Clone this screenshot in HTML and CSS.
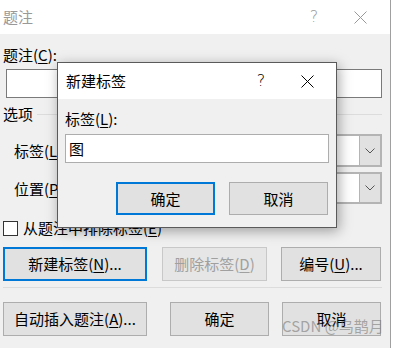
FILE: index.html
```html
<!DOCTYPE html>
<html lang="zh-CN">
<head>
  <meta charset="UTF-8">
  <title>题注</title>
  <link rel="stylesheet" href="styles.css">
</head>
<body>

  <div class="dialog main">
    <div class="titlebar">
      <span class="title">题注</span>
      <div class="controls">
        <span class="ctl help">?</span>
        <span class="ctl close">
          <svg width="13" height="13" viewBox="0 0 13 13"><path d="M0.5 0.5L12.5 12.5M12.5 0.5L0.5 12.5" stroke="currentColor" stroke-width="1" fill="none"/></svg>
        </span>
      </div>
    </div>

    <div class="content">
      <div class="label">题注(<u>C</u>):</div>
      <div class="textbox caption-box"></div>

      <div class="group-head">
        <span>选项</span>
        <span class="rule"></span>
      </div>

      <div class="field">
        <span class="field-label">标签(<u>L</u>):</span>
        <div class="combo"><span class="combo-text"></span><span class="combo-btn"><svg width="10" height="6" viewBox="0 0 10 6"><path d="M0.5 0.5L5 5L9.5 0.5" stroke="#555" fill="none"/></svg></span></div>
      </div>
      <div class="field second">
        <span class="field-label">位置(<u>P</u>):</span>
        <div class="combo"><span class="combo-text"></span><span class="combo-btn"><svg width="10" height="6" viewBox="0 0 10 6"><path d="M0.5 0.5L5 5L9.5 0.5" stroke="#555" fill="none"/></svg></span></div>
      </div>

      <div class="check-row">
        <span class="checkbox"></span>
        <span>从题注中排除标签(<u>E</u>)</span>
      </div>

      <div class="btn-row">
        <button class="btn focus w-wide">新建标签(<u>N</u>)...</button>
        <button class="btn disabled w-del" disabled>删除标签(<u>D</u>)</button>
        <button class="btn w-num">编号(<u>U</u>)...</button>
      </div>

      <div class="separator"></div>

      <div class="btn-row bottom">
        <button class="btn w-wide">自动插入题注(<u>A</u>)...</button>
        <button class="btn w-ok">确定</button>
        <button class="btn w-cancel">取消</button>
      </div>
    </div>

    <!-- New label dialog on top -->
    <div class="dialog popup">
      <div class="titlebar">
        <span class="title">新建标签</span>
        <div class="controls">
          <span class="ctl help">?</span>
          <span class="ctl close">
            <svg width="13" height="13" viewBox="0 0 13 13"><path d="M0.5 0.5L12.5 12.5M12.5 0.5L0.5 12.5" stroke="currentColor" stroke-width="1" fill="none"/></svg>
          </span>
        </div>
      </div>
      <div class="content">
        <div class="label">标签(<u>L</u>):</div>
        <div class="textbox">图</div>
        <div class="popup-buttons">
          <button class="btn focus">确定</button>
          <button class="btn">取消</button>
        </div>
      </div>
    </div>

    <div class="watermark">CSDN @乌鹊月</div>
  </div>

</body>
</html>
```

FILE: styles.css
```css
body {
  margin: 0;
  background: #fff;
  font-family: "Noto Sans CJK SC", "Noto Sans", sans-serif;
  font-size: 15px;
  color: #000;
  overflow: hidden;
}

u {
  text-decoration: underline;
  text-underline-offset: 2px;
}

.dialog.main {
  position: relative;
  width: 390px;
  height: 348px;
  border-right: 1px solid #a0a0a0;
  background: #f0f0f0;
}

.titlebar {
  display: flex;
  align-items: center;
  height: 34px;
  background: #fff;
  padding-left: 3px;
  padding-right: 7px;
}

.titlebar .title {
  color: #999;
  line-height: 20px;
}

.controls {
  margin-left: auto;
  display: flex;
  align-items: center;
}

.ctl {
  width: 46px;
  display: flex;
  justify-content: center;
  align-items: center;
  color: #999;
}

.ctl.help {
  font-family: "DejaVu Sans", sans-serif;
  font-size: 16px;
  font-weight: 300;
  line-height: 20px;
}

.content {
  padding: 11px 8px 0 3px;
}

.label {
  line-height: 20px;
}

.textbox {
  height: 29px;
  box-sizing: border-box;
  background: #fff;
  border: 1px solid #7a7a7a;
  line-height: 27px;
  padding-left: 3px;
}

.caption-box {
  margin: 4px 0 0 3px;
}

.group-head {
  display: flex;
  align-items: center;
  margin-top: 6px;
  height: 20px;
  line-height: 20px;
}

.group-head .rule {
  flex: 1;
  height: 1px;
  background: #dcdcdc;
  margin-left: 4px;
}

.field {
  display: flex;
  align-items: center;
  margin-top: 10px;
  height: 33px;
}

.field.second {
  margin-top: 5px;
  height: 32px;
}

.field-label {
  margin-left: 11px;
  width: 80px;
}

.combo {
  flex: 1;
  height: 100%;
  box-sizing: border-box;
  display: flex;
  border: 2px solid #b4b4b4;
  background: #fff;
}

.combo-text {
  flex: 1;
}

.combo-btn {
  width: 20px;
  background: #e1e1e1;
  border-left: 1px solid #b4b4b4;
  display: flex;
  justify-content: center;
  align-items: center;
}

.check-row {
  display: flex;
  align-items: center;
  margin-top: 14px;
  height: 20px;
  line-height: 20px;
}

.checkbox {
  width: 13px;
  height: 13px;
  background: #fff;
  border: 1px solid #333;
  margin-right: 5px;
}

.btn-row {
  display: flex;
  margin-top: 9px;
  height: 34px;
}

.btn {
  font-family: inherit;
  font-size: 15px;
  color: #000;
  background: #e1e1e1;
  border: 1px solid #adadad;
  border-radius: 0;
  padding: 0;
  height: 100%;
  box-sizing: border-box;
  line-height: 20px;
}

.btn.focus {
  border: 2px solid #0078d7;
}

.btn.disabled {
  color: #a0a0a0;
  background: #e6e6e6;
  border-color: #c8c8c8;
}

.w-wide { width: 144px; }
.w-del { width: 105px; margin-left: 15px; }
.w-num { width: 100px; margin-left: 14px; }
.w-ok { width: 99px; margin-left: 23px; }
.w-cancel { width: 99px; margin-left: 13px; }

.separator {
  height: 1px;
  background: #dcdcdc;
  margin-top: 6px;
}

.btn-row.bottom {
  margin-top: 14px;
}

/* popup dialog */
.dialog.popup {
  position: absolute;
  left: 57px;
  top: 62px;
  width: 280px;
  height: 166px;
  box-sizing: border-box;
  border: 1px solid #5a5a5a;
  background: #f0f0f0;
  box-shadow: 2px 3px 12px rgba(0, 0, 0, 0.35);
}

.popup .titlebar {
  height: 36px;
  padding-left: 8px;
  padding-right: 6px;
}

.popup .titlebar .title,
.popup .ctl {
  color: #000;
}

.popup .content {
  padding: 10px 7px 0 7px;
}

.popup .textbox {
  margin-top: 5px;
  border-color: #adadad;
}

.popup-buttons {
  display: flex;
  justify-content: flex-end;
  gap: 14px;
  margin-top: 19px;
  padding-right: 1px;
  height: 33px;
}

.popup-buttons .btn {
  width: 99px;
}

.watermark {
  position: absolute;
  left: 282px;
  top: 316px;
  font-size: 15px;
  line-height: 20px;
  color: rgba(110, 110, 110, 0.55);
  white-space: nowrap;
}
```
